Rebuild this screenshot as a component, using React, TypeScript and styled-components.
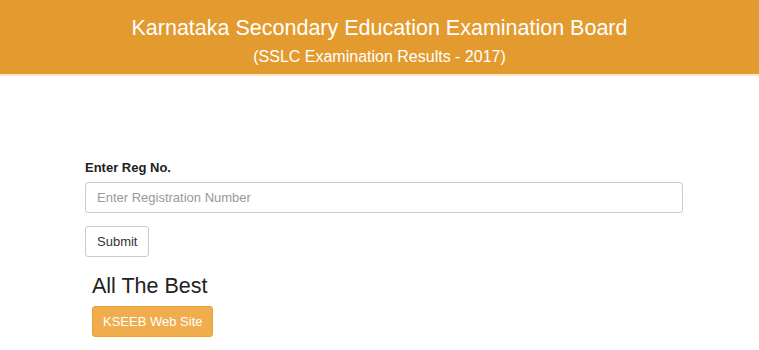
import styled, { createGlobalStyle } from 'styled-components';

const GlobalStyle = createGlobalStyle`
  body {
    margin: 0;
    background: #fff;
    font-family: "Liberation Sans", Arial, sans-serif;
    color: #333;
  }
`;

function App() {
  return (
    <>
      <GlobalStyle />
      <Header>
        <Title>Karnataka Secondary Education Examination Board</Title>
        <SubTitle>(SSLC Examination Results - 2017)</SubTitle>
      </Header>

      <Main>
        <Label htmlFor="regno">Enter Reg No.</Label>
        <Input id="regno" placeholder="Enter Registration Number" />
        <SubmitButton>Submit</SubmitButton>

        <Wish>All The Best</Wish>
        <SiteButton>KSEEB Web Site</SiteButton>
      </Main>
    </>
  );
}

export default App;

const Header = styled.header`
  background-color: #e39b30;
  height: 74px;
  border-bottom: 2px solid #fbe9c4;
  display: flex;
  flex-direction: column;
  align-items: center;
  color: #fff;
`;

const Title = styled.div`
  font-size: 21.5px;
  margin-top: 15px;
  line-height: 26px;
`;

const SubTitle = styled.div`
  font-size: 16px;
  margin-top: 6px;
  line-height: 20px;
`;

const Main = styled.main`
  padding: 84px 0 0 85px;
  width: 598px;
  display: flex;
  flex-direction: column;
  align-items: flex-start;
`;

const Label = styled.label`
  font-weight: bold;
  font-size: 13px;
  color: #222;
  margin-bottom: 7px;
`;

const Input = styled.input`
  box-sizing: border-box;
  width: 100%;
  height: 31px;
  padding: 0 11px;
  border: 1px solid #ccc;
  border-radius: 3px;
  font-family: inherit;
  font-size: 13px;
  outline: none;

  &::placeholder {
    color: #999;
  }
`;

const SubmitButton = styled.button`
  margin-top: 13px;
  height: 31px;
  padding: 0 11px;
  background: #fff;
  border: 1px solid #ccc;
  border-radius: 3px;
  font-family: inherit;
  font-size: 13px;
  color: #333;
  cursor: pointer;
`;

const Wish = styled.h3`
  margin: 16px 0 0 7px;
  font-size: 21.5px;
  font-weight: normal;
  line-height: 26px;
  color: #222;
`;

const SiteButton = styled.button`
  margin: 7px 0 0 7px;
  height: 31px;
  padding: 0 10px;
  background: #f0ad4e;
  border: 1px solid #eea236;
  border-radius: 3px;
  font-family: inherit;
  font-size: 13px;
  color: #fff;
  cursor: pointer;
`;
